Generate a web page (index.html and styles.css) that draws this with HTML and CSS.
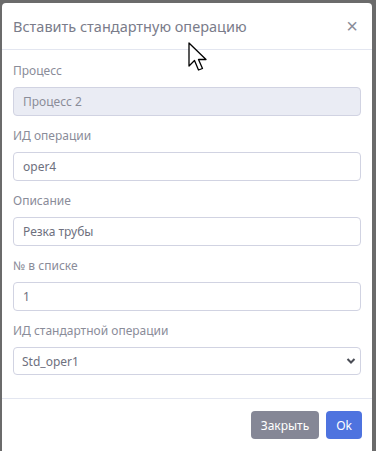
FILE: index.html
```html
<!DOCTYPE html>
<html lang="ru">
<head>
    <meta charset="UTF-8">
    <meta name="viewport" content="width=device-width, initial-scale=1.0">
    <title>Вставить стандартную операцию</title>
    <link rel="stylesheet" href="styles.css">
</head>
<body>
    <div class="modal">
        <div class="modal-header">
            <h5 class="modal-title">Вставить стандартную операцию</h5>
            <button class="close" type="button">&times;</button>
        </div>

        <form class="modal-body">
            <div class="form-group">
                <label for="process">Процесс</label>
                <input type="text" id="process" class="form-control" value="Процесс 2" disabled>
            </div>
            <div class="form-group">
                <label for="operId">ИД операции</label>
                <input type="text" id="operId" class="form-control" value="oper4">
            </div>
            <div class="form-group">
                <label for="descr">Описание</label>
                <input type="text" id="descr" class="form-control" value="Резка трубы">
            </div>
            <div class="form-group">
                <label for="num">№ в списке</label>
                <input type="text" id="num" class="form-control" value="1">
            </div>
            <div class="form-group">
                <label for="stdOper">ИД стандартной операции</label>
                <div class="select-wrap">
                    <select id="stdOper" class="form-control">
                        <option>Std_oper1</option>
                        <option>Std_oper2</option>
                    </select>
                    <svg class="select-arrow" width="10" height="8" viewBox="0 0 10 8">
                        <path d="M1.5 2 L5 5.5 L8.5 2" fill="none" stroke="#4a4d55" stroke-width="2"/>
                    </svg>
                </div>
            </div>
        </form>

        <div class="modal-footer">
            <button type="button" class="btn btn-secondary">Закрыть</button>
            <button type="button" class="btn btn-primary">Ok</button>
        </div>
    </div>

    <svg class="cursor" width="22" height="32" viewBox="0 0 22 32">
        <path d="M1 1 L1 24 L6.5 18.5 L10.5 28 L14.5 26.5 L10.5 17.5 L18 17.5 Z" fill="#fff" stroke="#000" stroke-width="1.3" stroke-linejoin="round"/>
    </svg>
</body>
</html>
```

FILE: styles.css
```css
body {
    margin: 0;
    padding: 0;
    background-color: #6b6b6b;
    font-family: "Noto Sans", "Open Sans", sans-serif;
    height: 451px;
    overflow: hidden;
}

.modal {
    margin: 3px 0 0 2px;
    width: 370px;
    height: 448px;
    background-color: #fff;
    border-radius: 4px 4px 0 0;
    display: flex;
    flex-direction: column;
}

.modal-header {
    display: flex;
    justify-content: space-between;
    align-items: center;
    height: 46px;
    padding: 0 10px 0 11px;
    border-bottom: 1px solid #e3e6f0;
}

.modal-title {
    margin: 0;
    font-size: 14.5px;
    font-weight: 400;
    color: #7a7c8a;
}

.close {
    background: none;
    border: none;
    padding: 0 4px;
    font-size: 20px;
    line-height: 20px;
    color: #8a8c99;
    cursor: pointer;
}

.modal-body {
    margin: 0;
    padding: 13px 10px 11px 11px;
    border-bottom: 1px solid #e3e6f0;
}

.form-group {
    margin-bottom: 12px;
}

.form-group label {
    display: block;
    font-size: 12px;
    line-height: 16px;
    color: #8a8c99;
    margin-bottom: 8px;
}

.form-control {
    display: block;
    box-sizing: border-box;
    width: 348px;
    height: 29px;
    padding: 0 9px;
    font-family: inherit;
    font-size: 12px;
    color: #6e707e;
    background-color: #fff;
    border: 1px solid #d1d3e2;
    border-radius: 4px;
}

.form-control:disabled {
    background-color: #eaecf4;
    color: #8a8c99;
}

.select-wrap {
    position: relative;
    width: 348px;
}

select.form-control {
    appearance: none;
    height: 28px;
    padding-left: 8px;
}

.select-arrow {
    position: absolute;
    right: 5px;
    top: 10px;
    pointer-events: none;
}

.modal-footer {
    display: flex;
    justify-content: flex-end;
    gap: 7px;
    padding: 12px 10px;
}

.btn {
    height: 28px;
    padding: 0 10px;
    border: none;
    border-radius: 4px;
    color: #fff;
    font-family: inherit;
    font-size: 12px;
    cursor: pointer;
}

.btn-secondary {
    background-color: #858796;
}

.btn-primary {
    background-color: #4e73df;
}

.cursor {
    position: absolute;
    left: 188px;
    top: 42px;
}
```
